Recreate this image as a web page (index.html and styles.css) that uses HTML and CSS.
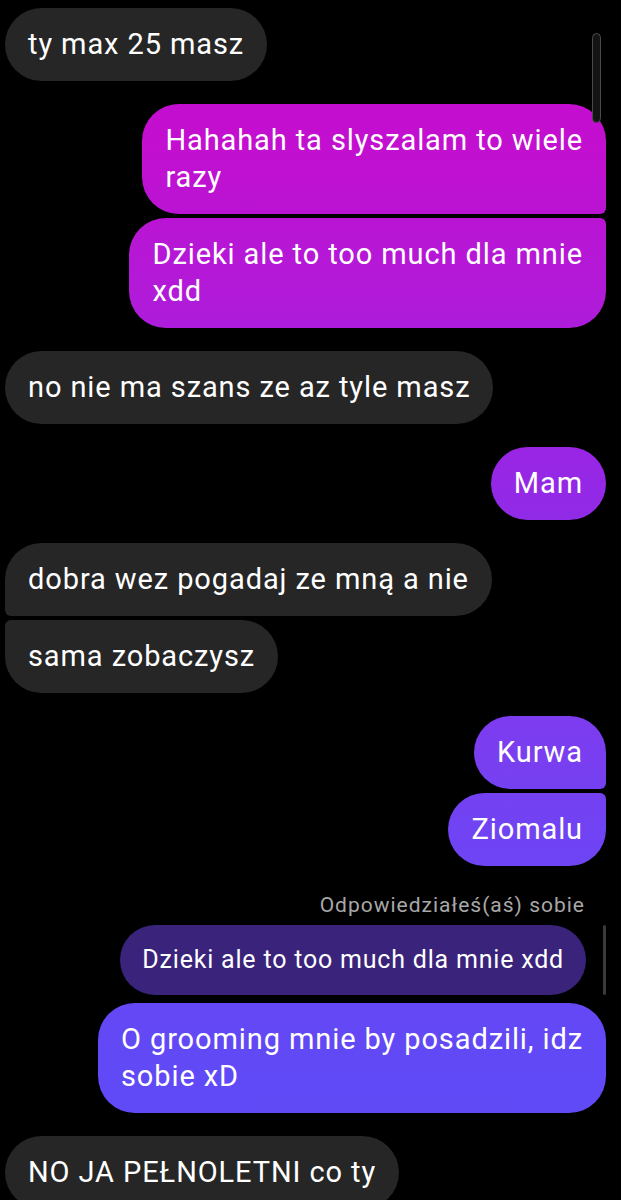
FILE: index.html
```html
<!DOCTYPE html>
<html lang="pl">
<head>
<meta charset="utf-8">
<title>Czat</title>
<link rel="stylesheet" href="styles.css">
</head>
<body>
<div class="thread">
  <div class="scroll-thumb"></div>

  <div class="row in">
    <div class="bubble gray">ty max 25 masz</div>
  </div>

  <div class="row out gap-big">
    <div class="bubble grad grp-first">Hahahah ta slyszalam to wiele<br>razy</div>
  </div>
  <div class="row out gap-small">
    <div class="bubble grad grp-last">Dzieki ale to too much dla mnie<br>xdd</div>
  </div>

  <div class="row in gap-big">
    <div class="bubble gray">no nie ma szans ze az tyle masz</div>
  </div>

  <div class="row out gap-big">
    <div class="bubble grad">Mam</div>
  </div>

  <div class="row in gap-big">
    <div class="bubble gray in-first">dobra wez pogadaj ze mną a nie</div>
  </div>
  <div class="row in gap-small">
    <div class="bubble gray in-last">sama zobaczysz</div>
  </div>

  <div class="row out gap-big">
    <div class="bubble grad grp-first">Kurwa</div>
  </div>
  <div class="row out gap-small">
    <div class="bubble grad grp-last">Ziomalu</div>
  </div>

  <div class="reply-label">Odpowiedziałeś(aś) sobie</div>
  <div class="row out reply-row">
    <div class="bubble quoted">Dzieki ale to too much dla mnie xdd</div>
    <div class="reply-bar"></div>
  </div>
  <div class="row out gap-reply">
    <div class="bubble grad">O grooming mnie by posadzili, idz<br>sobie xD</div>
  </div>

  <div class="row in gap-big">
    <div class="bubble gray">NO JA PEŁNOLETNI co ty</div>
  </div>
</div>
</body>
</html>
```

FILE: styles.css
```css
html, body {
  margin: 0;
  padding: 0;
  background: #000;
}

body {
  font-family: Roboto, "Noto Sans", "Liberation Sans", sans-serif;
  color: #fff;
  height: 1200px;
  overflow: hidden;
}

.thread {
  position: relative;
  display: flex;
  flex-direction: column;
  padding: 8px 15px 0 5px;
}

.scroll-thumb {
  position: absolute;
  left: 592px;
  top: 33px;
  width: 7px;
  height: 88px;
  border: 1.5px solid #4a4a4a;
  border-radius: 6px;
  background: #141414;
}

.row {
  display: flex;
}

.row.in {
  justify-content: flex-start;
}

.row.out {
  justify-content: flex-end;
}

.gap-big {
  margin-top: 23px;
}

.gap-small {
  margin-top: 4px;
}

.bubble {
  font-size: 29px;
  line-height: 37px;
  letter-spacing: 0.9px;
  padding: 18px 23px;
  border-radius: 37px;
  white-space: nowrap;
}

.gray {
  background: #262626;
}

.grad {
  background: linear-gradient(180deg,
      #c90bcd 0px,
      #c20fd0 150px,
      #b21ad8 290px,
      #9428e6 485px,
      #7a3ef0 750px,
      #7043f3 830px,
      #6149f6 1060px,
      #5b4cf7 1200px) fixed;
}

.grp-first {
  border-bottom-right-radius: 6px;
}

.grp-last {
  border-top-right-radius: 6px;
}

.in-first {
  border-bottom-left-radius: 6px;
}

.in-last {
  border-top-left-radius: 6px;
}

.reply-label {
  margin-top: 27px;
  margin-right: 21px;
  text-align: right;
  font-size: 21px;
  line-height: 24px;
  letter-spacing: 1px;
  color: #a8a8a8;
}

.reply-row {
  margin-top: 8px;
  gap: 17px;
  align-items: stretch;
}

.quoted {
  background: #3a237a;
  font-size: 25px;
  line-height: 34px;
  letter-spacing: 0.8px;
  padding: 18px 22px;
  border-radius: 36px;
}

.reply-bar {
  width: 3px;
  border-radius: 2px;
  background: #3a3a3a;
}

.gap-reply {
  margin-top: 8px;
}
```
